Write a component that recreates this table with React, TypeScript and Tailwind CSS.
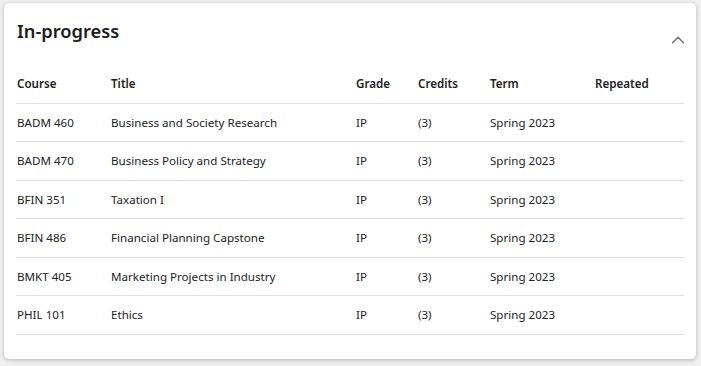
import React from 'react'
import { ChevronUp } from 'lucide-react'

const rows = [
  { course: 'BADM 460', title: 'Business and Society Research', grade: 'IP', credits: '(3)', term: 'Spring 2023', repeated: '' },
  { course: 'BADM 470', title: 'Business Policy and Strategy', grade: 'IP', credits: '(3)', term: 'Spring 2023', repeated: '' },
  { course: 'BFIN 351', title: 'Taxation I', grade: 'IP', credits: '(3)', term: 'Spring 2023', repeated: '' },
  { course: 'BFIN 486', title: 'Financial Planning Capstone', grade: 'IP', credits: '(3)', term: 'Spring 2023', repeated: '' },
  { course: 'BMKT 405', title: 'Marketing Projects in Industry', grade: 'IP', credits: '(3)', term: 'Spring 2023', repeated: '' },
  { course: 'PHIL 101', title: 'Ethics', grade: 'IP', credits: '(3)', term: 'Spring 2023', repeated: '' },
]

const cols = 'grid grid-cols-[94px_245px_62px_72px_105px_1fr] pl-[1px]'

export default function App() {
  return (
    <div className="w-[701px] h-[366px] bg-[#f0f0f0] pt-[3px] pl-[4px] font-['Noto_Sans',sans-serif]">
      <div className="w-[692px] h-[356px] bg-white rounded-[5px] shadow-[0_1px_4px_rgba(0,0,0,0.25)] px-[12px] pt-[14px]">
        {/* Header */}
        <div className="flex h-[28px] items-start justify-between">
          <h2 className="pl-[1px] text-[18.3px] leading-[28px] font-semibold text-[#1c1c1c]">In-progress</h2>
          <ChevronUp className="mt-[11.5px] mr-[-5px] shrink-0 text-[#6b6b6b]" size={22} strokeWidth={1.4} />
        </div>

        {/* Table */}
        <div className="mt-[20.5px] text-[11.6px] text-[#222]">
          <div className={`${cols} h-[38px] items-center border-b border-[#dedede] font-semibold`}>
            <span>Course</span>
            <span>Title</span>
            <span>Grade</span>
            <span>Credits</span>
            <span>Term</span>
            <span>Repeated</span>
          </div>
          {rows.map((r) => (
            <div key={r.course} className={`${cols} h-[38.5px] items-center border-b border-[#dedede]`}>
              <span>{r.course}</span>
              <span>{r.title}</span>
              <span>{r.grade}</span>
              <span>{r.credits}</span>
              <span>{r.term}</span>
              <span>{r.repeated}</span>
            </div>
          ))}
        </div>
      </div>
    </div>
  )
}
